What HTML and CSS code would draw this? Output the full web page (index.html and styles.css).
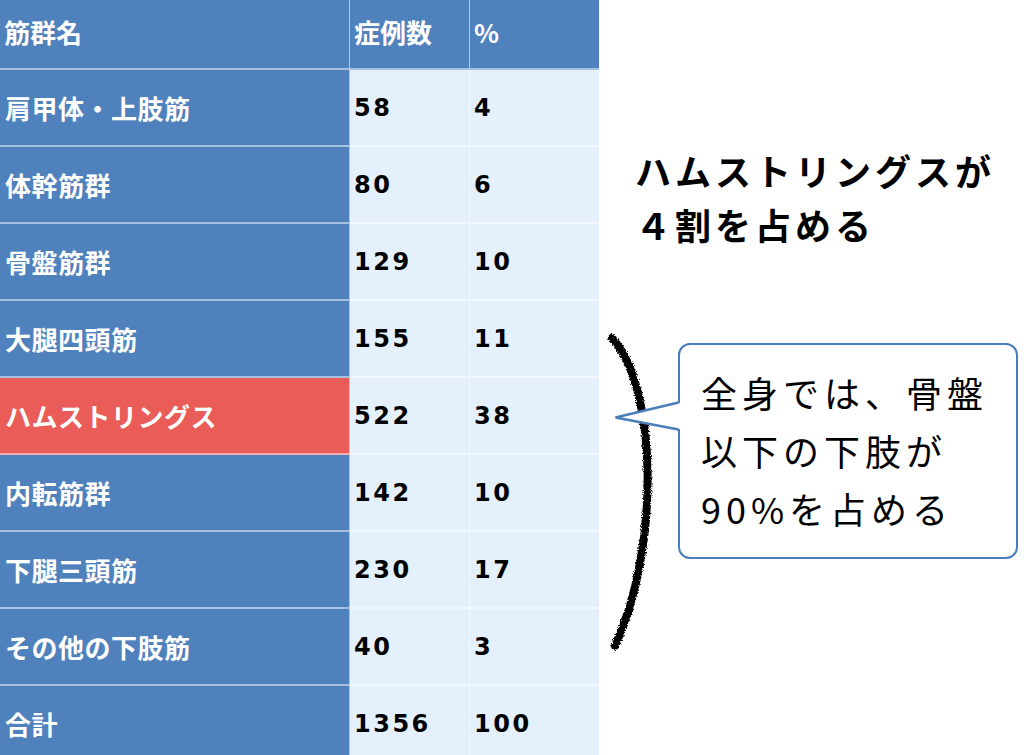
FILE: index.html
```html
<!DOCTYPE html>
<html lang="ja">
<head>
<meta charset="utf-8">
<title>筋群別症例数</title>
<link rel="stylesheet" href="styles.css">
</head>
<body>
<div class="page">
  <div class="grid">
    <div class="cell head">筋群名</div>
    <div class="cell head">症例数</div>
    <div class="cell head last">%</div>

    <div class="cell name">肩甲体・上肢筋</div>
    <div class="cell num">58</div>
    <div class="cell num last">4</div>

    <div class="cell name">体幹筋群</div>
    <div class="cell num">80</div>
    <div class="cell num last">6</div>

    <div class="cell name">骨盤筋群</div>
    <div class="cell num">129</div>
    <div class="cell num last">10</div>

    <div class="cell name">大腿四頭筋</div>
    <div class="cell num">155</div>
    <div class="cell num last">11</div>

    <div class="cell name hot">ハムストリングス</div>
    <div class="cell num">522</div>
    <div class="cell num last">38</div>

    <div class="cell name">内転筋群</div>
    <div class="cell num">142</div>
    <div class="cell num last">10</div>

    <div class="cell name">下腿三頭筋</div>
    <div class="cell num">230</div>
    <div class="cell num last">17</div>

    <div class="cell name">その他の下肢筋</div>
    <div class="cell num">40</div>
    <div class="cell num last">3</div>

    <div class="cell name">合計</div>
    <div class="cell num">1356</div>
    <div class="cell num last">100</div>
  </div>

  <div class="side">
    <div class="heading">ハムストリングスが<br>４割を占める</div>
    <div class="callout">
      <svg class="bracket" width="60" height="320" viewBox="0 0 60 320">
        <defs>
          <filter id="rough" x="-30%" y="-5%" width="160%" height="110%">
            <feTurbulence type="fractalNoise" baseFrequency="1.2" numOctaves="2" seed="5" result="n"/>
            <feDisplacementMap in="SourceGraphic" in2="n" scale="4" xChannelSelector="R" yChannelSelector="G"/>
          </filter>
        </defs>
        <path d="M12,5 C58,55 60,215 15,313" fill="none" stroke="#000" stroke-width="8" stroke-linecap="round" filter="url(#rough)"/>
      </svg>
      <div class="bubble">
        <svg class="pointer" width="70" height="30" viewBox="0 0 70 30">
          <polygon points="1.5,16.5 64,2 70,2 70,28 64,28" fill="#fff"/>
          <polyline points="64.5,1.5 1.5,16.5 64.5,28.5" fill="none" stroke="#4a7ebb" stroke-width="2.5" stroke-linejoin="miter"/>
        </svg>
        <p class="bubble-text">全身では、骨盤<br>以下の下肢が<br>90%を占める</p>
      </div>
    </div>
  </div>
</div>
</body>
</html>
```

FILE: styles.css
```css
html, body {
  margin: 0;
  padding: 0;
  background: #ffffff;
}

body {
  font-family: "Noto Sans CJK JP", "Noto Sans", sans-serif;
}

.page {
  width: 1029px;
  height: 755px;
  overflow: hidden;
  display: flex;
  align-items: flex-start;
}

.grid {
  flex-shrink: 0;
  display: grid;
  grid-template-columns: 350px 120px 129px;
  grid-template-rows: 70px repeat(9, 77px);
}

.cell {
  box-sizing: border-box;
  display: flex;
  align-items: center;
  padding-left: 4px;
  border-bottom: 2px solid rgba(255, 255, 255, 0.5);
  border-right: 1px solid rgba(255, 255, 255, 0.55);
  background: #e4f0fc;
}

.cell.last {
  border-right: none;
}

.head {
  background: #4f81bd;
  color: #ffffff;
  font-weight: 700;
  font-size: 26px;
  padding-bottom: 6px;
}

.name {
  background: #4f81bd;
  color: #ffffff;
  font-weight: 700;
  font-size: 26px;
  letter-spacing: 0.5px;
  padding-left: 5px;
}

.name.hot {
  background: #e95c57;
}

.num {
  font-family: "DejaVu Sans", "Noto Sans", sans-serif;
  color: #000000;
  font-weight: 700;
  font-size: 24px;
  letter-spacing: 2.5px;
  padding-left: 4px;
}

.side {
  flex: 1;
  padding-top: 143px;
}

.heading {
  padding-left: 36px;
  font-size: 36px;
  font-weight: 700;
  letter-spacing: 4px;
  line-height: 54px;
  color: #000000;
}

.callout {
  display: flex;
  align-items: flex-start;
  margin-top: 82px;
}

.bracket {
  display: block;
  margin-left: 1px;
  flex-shrink: 0;
}

.bubble {
  position: relative;
  box-sizing: border-box;
  margin-left: 18px;
  margin-top: 10px;
  width: 340px;
  height: 216px;
  border: 2.5px solid #4a7ebb;
  border-radius: 12px;
  background: #ffffff;
  padding: 18px 0 0 21px;
}

.pointer {
  position: absolute;
  left: -66px;
  top: 56px;
  display: block;
}

.bubble-text {
  margin: 0;
  font-size: 36px;
  font-weight: 400;
  letter-spacing: 5px;
  line-height: 58px;
  color: #000000;
}
```
